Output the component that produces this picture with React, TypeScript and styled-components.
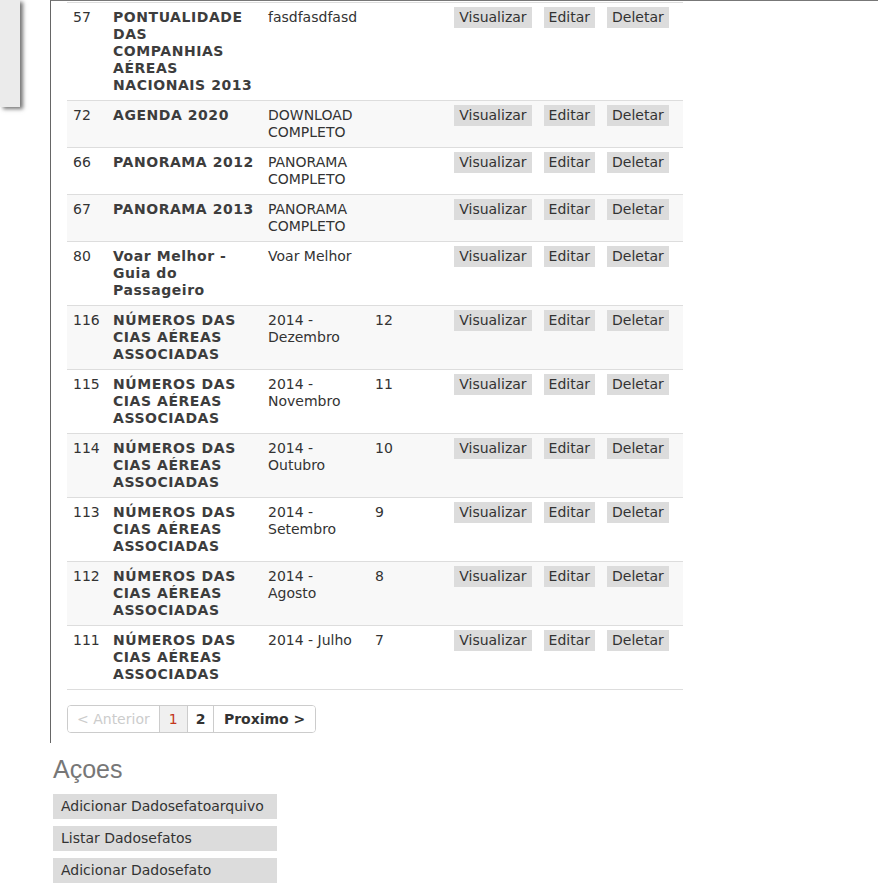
import React from "react";
import styled, { createGlobalStyle } from "styled-components";

const GlobalStyle = createGlobalStyle`
  html, body { margin: 0; padding: 0; background: #fff; }
  body {
    font-family: "DejaVu Sans", Verdana, sans-serif;
    font-size: 14px;
    line-height: 17px;
    color: #333;
  }
`;

const Page = styled.div`
  width: 878px;
`;

const TopRow = styled.div`
  display: flex;
  align-items: flex-start;
`;

const SideTab = styled.div`
  width: 20px;
  height: 107px;
  background: #ebebeb;
  box-shadow: 3px 2px 4px rgba(0, 0, 0, 0.55);
  margin-right: 30px;
  flex: none;
`;

const IndexColumn = styled.div`
  flex: 1;
  border-left: 1px solid #666;
  border-top: 1px solid #777;
  padding: 1px 0 10px 16px;
`;

const Table = styled.table`
  width: 616px;
  border-collapse: collapse;
  table-layout: fixed;
  border-top: 1px solid #ddd;
`;

const Row = styled.tr<{ $alt: boolean }>`
  background: ${(p) => (p.$alt ? "#f8f8f8" : "#fff")};
  border-bottom: 1px solid #ddd;
`;

const Cell = styled.td<{ $bold?: boolean }>`
  padding: 6px;
  vertical-align: top;
  text-align: left;
  font-weight: ${(p) => (p.$bold ? "bold" : "normal")};
  letter-spacing: ${(p) => (p.$bold ? "0.55px" : "normal")};
  color: ${(p) => (p.$bold ? "#3d3d3d" : "#333")};
`;

const ActionsCell = styled.td`
  padding: 6px;
  vertical-align: top;
  text-align: center;
  white-space: nowrap;
`;

const RowButton = styled.a`
  display: inline-block;
  margin: 0 6px;
  padding: 0 5px;
  height: 21px;
  line-height: 21px;
  margin-top: -2px;
  background: #dcdcdc;
  color: #333;
  text-decoration: none;
  cursor: pointer;
`;

const Pager = styled.div`
  display: inline-flex;
  margin-top: 15px;
  border: 1px solid #ccc;
  border-radius: 4px;
  overflow: hidden;
`;

const PageItem = styled.span<{ $state?: "disabled" | "current" | "link"; $pad?: number }>`
  height: 26px;
  display: flex;
  align-items: center;
  padding: 0 ${(p) => p.$pad ?? 9}px;
  border-left: 1px solid #ccc;
  &:first-child { border-left: none; }
  color: ${(p) => (p.$state === "disabled" ? "#ccc" : p.$state === "current" ? "#c3361b" : "#333")};
  background: ${(p) => (p.$state === "current" ? "#f0f0f0" : "#fff")};
  font-weight: ${(p) => (p.$state === "link" ? "bold" : "normal")};
`;

const ActionsSection = styled.div`
  padding: 11px 0 0 53px;
`;

const ActionsTitle = styled.h3`
  margin: 0 0 10px;
  font-family: "Liberation Sans", Arial, sans-serif;
  font-weight: normal;
  font-size: 25px;
  line-height: 30px;
  color: #777;
`;

const ActionList = styled.ul`
  list-style: none;
  margin: 0;
  padding: 0;
  display: flex;
  flex-direction: column;
  gap: 7px;
`;

const ActionButton = styled.li`
  width: 224px;
  height: 25px;
  line-height: 25px;
  box-sizing: border-box;
  padding: 0 8px;
  background: #dcdcdc;
  color: #333;
`;

type Item = { id: string; title: string; desc: string; num: string };

const items: Item[] = [
  { id: "57", title: "PONTUALIDADE DAS COMPANHIAS AÉREAS NACIONAIS 2013", desc: "fasdfasdfasd", num: "" },
  { id: "72", title: "AGENDA 2020", desc: "DOWNLOAD COMPLETO", num: "" },
  { id: "66", title: "PANORAMA 2012", desc: "PANORAMA COMPLETO", num: "" },
  { id: "67", title: "PANORAMA 2013", desc: "PANORAMA COMPLETO", num: "" },
  { id: "80", title: "Voar Melhor - Guia do Passageiro", desc: "Voar Melhor", num: "" },
  { id: "116", title: "NÚMEROS DAS CIAS AÉREAS ASSOCIADAS", desc: "2014 - Dezembro", num: "12" },
  { id: "115", title: "NÚMEROS DAS CIAS AÉREAS ASSOCIADAS", desc: "2014 - Novembro", num: "11" },
  { id: "114", title: "NÚMEROS DAS CIAS AÉREAS ASSOCIADAS", desc: "2014 - Outubro", num: "10" },
  { id: "113", title: "NÚMEROS DAS CIAS AÉREAS ASSOCIADAS", desc: "2014 - Setembro", num: "9" },
  { id: "112", title: "NÚMEROS DAS CIAS AÉREAS ASSOCIADAS", desc: "2014 - Agosto", num: "8" },
  { id: "111", title: "NÚMEROS DAS CIAS AÉREAS ASSOCIADAS", desc: "2014 - Julho", num: "7" },
];

export default function App() {
  return (
    <Page>
      <GlobalStyle />
      <TopRow>
        <SideTab />
        <IndexColumn>
          <Table>
            <colgroup>
              <col style={{ width: 40 }} />
              <col style={{ width: 155 }} />
              <col style={{ width: 107 }} />
              <col style={{ width: 71 }} />
              <col style={{ width: 243 }} />
            </colgroup>
            <tbody>
              {items.map((it, i) => (
                <Row key={it.id} $alt={i % 2 === 1}>
                  <Cell>{it.id}</Cell>
                  <Cell $bold>{it.title}</Cell>
                  <Cell>{it.desc}</Cell>
                  <Cell>{it.num}</Cell>
                  <ActionsCell>
                    <RowButton>Visualizar</RowButton>
                    <RowButton>Editar</RowButton>
                    <RowButton>Deletar</RowButton>
                  </ActionsCell>
                </Row>
              ))}
            </tbody>
          </Table>
          <Pager>
            <PageItem $state="disabled" $pad={9}>&lt; Anterior</PageItem>
            <PageItem $state="current">1</PageItem>
            <PageItem $state="link" $pad={8}>2</PageItem>
            <PageItem $state="link" $pad={9.5}>Proximo &gt;</PageItem>
          </Pager>
        </IndexColumn>
      </TopRow>
      <ActionsSection>
        <ActionsTitle>Açoes</ActionsTitle>
        <ActionList>
          <ActionButton>Adicionar Dadosefatoarquivo</ActionButton>
          <ActionButton>Listar Dadosefatos</ActionButton>
          <ActionButton>Adicionar Dadosefato</ActionButton>
        </ActionList>
      </ActionsSection>
    </Page>
  );
}
